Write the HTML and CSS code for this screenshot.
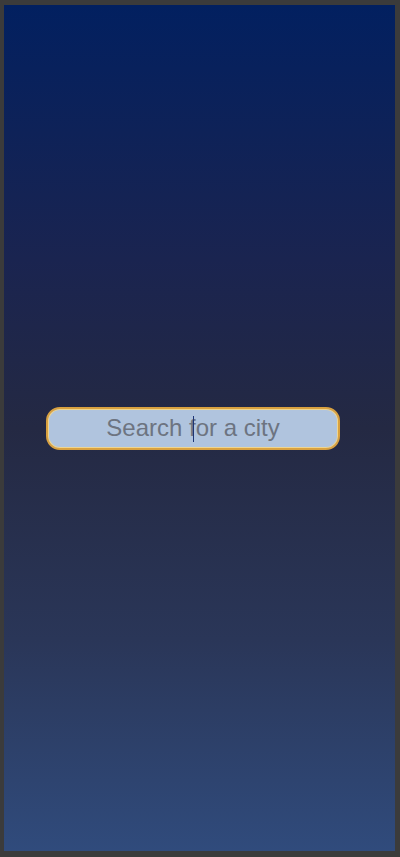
FILE: index.html
```html
<!DOCTYPE html>
<html lang="en">
<head>
<meta charset="utf-8">
<title>Weather</title>
<link rel="stylesheet" href="styles.css">
</head>
<body>
<main class="screen">
  <div class="search-wrap">
    <input class="search" type="text" placeholder="Search for a city">
    <span class="caret"></span>
  </div>
</main>
</body>
</html>
```

FILE: styles.css
```css
html, body {
  margin: 0;
  height: 100%;
}
body {
  background: #3b3b3b;
  padding: 5px 5px 6px 4px;
  box-sizing: border-box;
  display: flex;
  font-family: "Liberation Sans", Arial, sans-serif;
}
.screen {
  flex: 1;
  background: linear-gradient(to bottom, #022060 0%, #1a2450 30%, #242943 50%, #2a3658 75%, #304b7c 100%);
  display: flex;
  align-items: center;
}
.search-wrap {
  position: relative;
  margin-left: 42px;
  width: 294px;
}
.search {
  display: block;
  width: 100%;
  height: 43px;
  box-sizing: border-box;
  border: 2px solid #d9a140;
  box-shadow: inset 0 0 0 1px #efd58e;
  border-radius: 14px;
  background: #b0c4de;
  font-family: "Liberation Sans", Arial, sans-serif;
  font-size: 24px;
  text-align: center;
  color: #1b2f63;
  outline: none;
  padding: 0 10px;
}
.search::placeholder {
  color: #6d7481;
  opacity: 1;
}
.caret {
  position: absolute;
  left: 147px;
  top: 9px;
  width: 1px;
  height: 26px;
  background: #1d3575;
}
```
